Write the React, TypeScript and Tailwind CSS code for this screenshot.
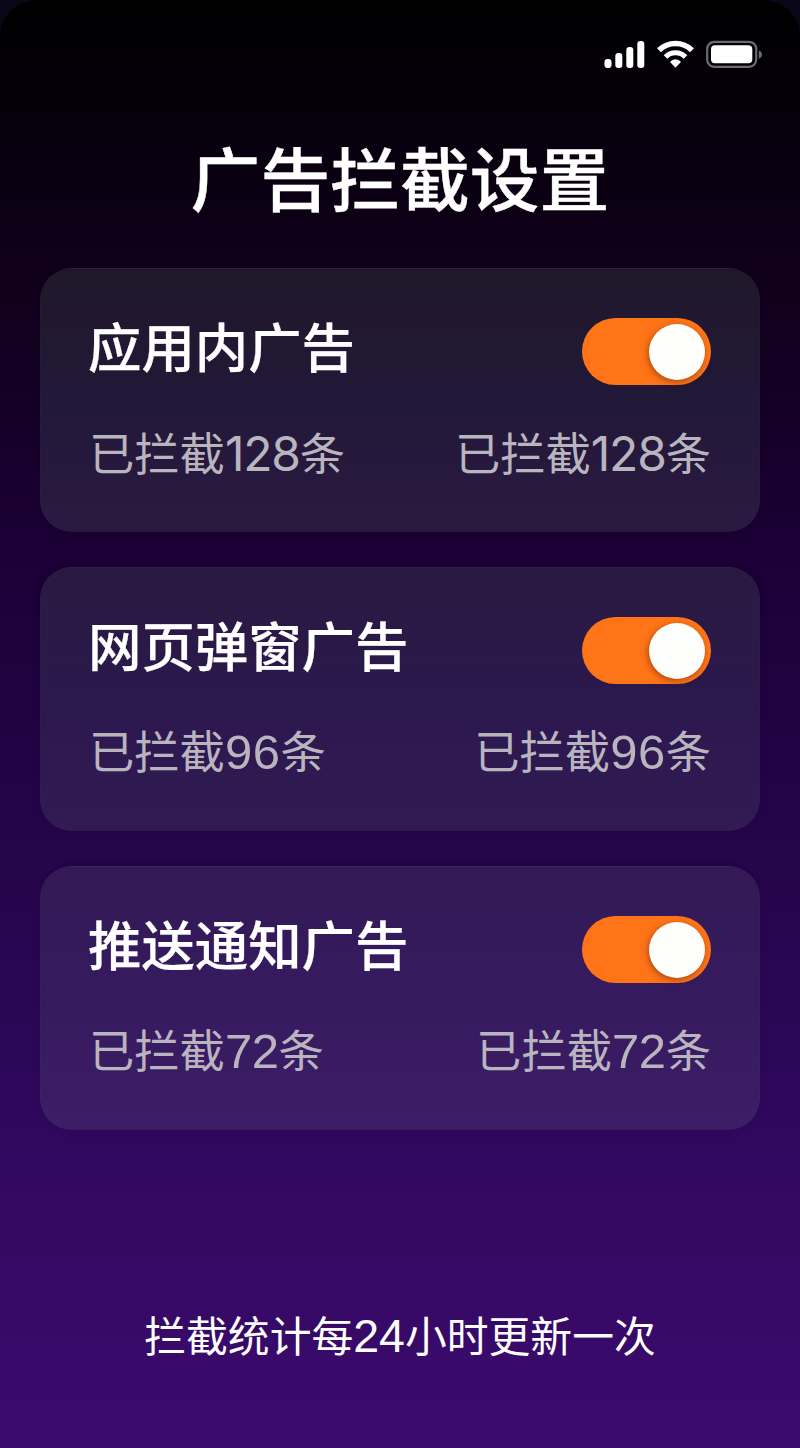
const groups = [
  {
    title: '应用内广告',
    count: 128,
    surface: 'from-[#20182a] via-[#221838] to-[#2b1942]',
    digits: "font-['Inter'] text-[48px] tracking-[-1.2px]",
  },
  {
    title: '网页弹窗广告',
    count: 96,
    surface: 'from-[#2a1a40] via-[#2b184d] to-[#321a54]',
    digits: 'text-[49px] tracking-[0.5px]',
  },
  {
    title: '推送通知广告',
    count: 72,
    surface: 'from-[#331a55] via-[#361a5f] to-[#3c1d66]',
    digits: 'text-[49px] tracking-[-0.4px]',
  },
];

type Group = (typeof groups)[number];

function StatusBar() {
  return (
    <div className="flex h-[110px] items-start justify-end pr-[37px] pt-[40px]">
      <svg width="160" height="30" viewBox="0 0 160 30" fill="none">
        <g fill="#fff">
          <rect x="1.5" y="19" width="7" height="9" rx="3" />
          <rect x="12.3" y="13" width="7" height="15" rx="3" />
          <rect x="23.3" y="7" width="7" height="21" rx="3" />
          <rect x="34.3" y="1" width="7" height="27" rx="3" />
        </g>
        <g stroke="#fff" strokeWidth="5.6">
          <path d="M56 10.3a23.5 23.5 0 0 1 33 0" />
          <path d="M62.5 17a14 14 0 0 1 20 0" strokeWidth="5" />
        </g>
        <path
          d="M72.5 26.500l-4.300-4.600a7 7 0 0 1 8.600 0z"
          fill="#fff"
          stroke="#fff"
          strokeWidth="1.8"
          strokeLinejoin="round"
        />
        <rect x="104.2" y="1.8" width="49" height="25" rx="7" stroke="#6c6b70" strokeWidth="2.2" />
        <rect x="108" y="5.3" width="41.300" height="18" rx="4" fill="#fff" />
        <path d="M155.800 10.500c4.200 1.200 4.200 7 0 8.200z" fill="#6c6b70" />
      </svg>
    </div>
  );
}

function Toggle() {
  return (
    <button
      role="switch"
      aria-checked="true"
      className="flex h-[67px] w-[129px] items-center justify-end rounded-full bg-[#ff7417] pr-[6px]"
    >
      <span className="size-[56px] rounded-full bg-[#fefefc] shadow-[-1px_2px_6px_rgba(90,30,0,0.5)]" />
    </button>
  );
}

function Stat({ count, digits }: Pick<Group, 'count' | 'digits'>) {
  return (
    <span className="flex items-baseline">
      已拦截
      <span className={digits}>{count}</span>
      条
    </span>
  );
}

function Card({ title, count, surface, digits }: Group) {
  return (
    <section
      className={`h-[264px] rounded-[32px] border border-white/[0.015] bg-linear-to-b px-[48px] pt-[49px] shadow-[0_0_10px_rgba(0,0,0,0.12)] ${surface}`}
    >
      <div className="flex h-[67px] items-center justify-between">
        <h2 className="-ml-px pb-[5px] text-[53.4px] font-medium leading-[67px] text-white [-webkit-text-stroke:0.25px_white]">
          {title}
        </h2>
        <Toggle />
      </div>
      <div className="mt-[35px] flex justify-between text-[45.3px] leading-[67px] text-[#b9b5bf]">
        <Stat count={count} digits={digits} />
        <Stat count={count} digits={digits} />
      </div>
    </section>
  );
}

export default function App() {
  return (
    <div className="h-[1448px] w-[800px] overflow-hidden bg-[#080717] font-['Liberation_Sans','Noto_Sans_CJK_SC',sans-serif]">
      <main className="flex h-full flex-col rounded-t-[36px] bg-[linear-gradient(180deg,#000_0%,#040009_7%,#10001a_18%,#140025_27%,#1b0036_38%,#25054b_59%,#31085f_80%,#3c0b6e_100%)]">
        <StatusBar />
        <h1 className="h-[158px] pt-[22px] text-center text-[69.8px] font-medium leading-[100px] text-white [-webkit-text-stroke:0.4px_white]">
          广告拦截设置
        </h1>
        <div className="flex flex-col gap-[35px] px-[40px]">
          {groups.map((g) => (
            <Card key={g.title} {...g} />
          ))}
        </div>
        <p className="mt-[176px] flex items-baseline justify-center text-[41.8px] leading-[60px] text-white">
          拦截统计每
          <span className="text-[46.5px]">24</span>
          小时更新一次
        </p>
      </main>
    </div>
  );
}
